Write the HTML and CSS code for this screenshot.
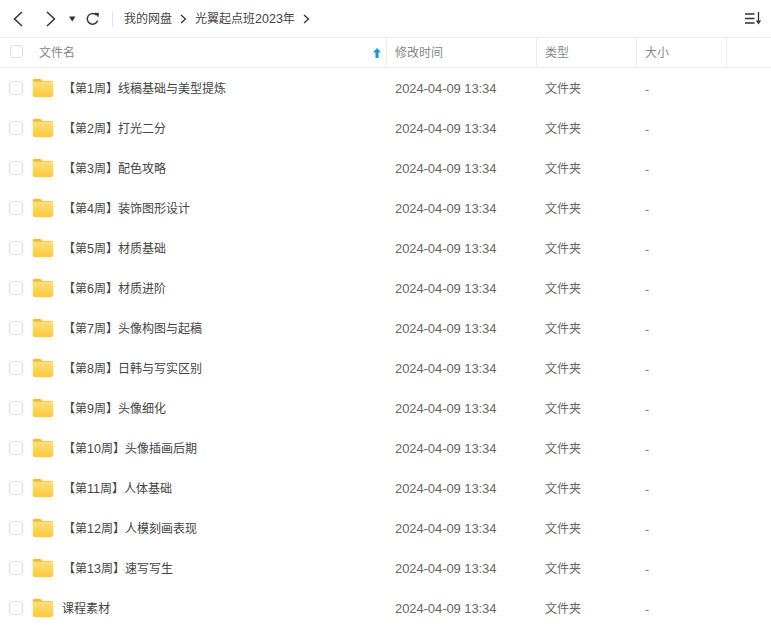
FILE: index.html
```html
<!DOCTYPE html>
<html lang="zh">
<head>
<meta charset="utf-8">
<title>光翼起点班2023年</title>
<link rel="stylesheet" href="styles.css">
</head>
<body>
<svg class="defs" width="0" height="0" aria-hidden="true">
  <defs>
    <linearGradient id="fg" x1="0" y1="0" x2="0" y2="1">
      <stop offset="0" stop-color="#ffe07a"/>
      <stop offset="1" stop-color="#fec93c"/>
    </linearGradient>
    <symbol id="folder" viewBox="0 0 20 18">
      <path d="M1.500 0h5.300c.8 0 1.300.4 1.700 1l.9 1.200h9.100a1.500 1.500 0 0 1 1.500 1.500V5H0V1.500A1.500 1.500 0 0 1 1.500 0z" fill="#f6b93b"/>
      <rect x="0" y="2.800" width="20" height="15.200" rx="1.800" fill="url(#fg)"/>
    </symbol>
  </defs>
</svg>
<header class="toolbar">
  <svg class="ic back" width="14" height="18" viewBox="0 0 14 18"><path d="M11 2 3.500 9 11 16" fill="none" stroke="#333" stroke-width="1.500"/></svg>
  <svg class="ic fwd" width="14" height="18" viewBox="0 0 14 18"><path d="M3 2l7.500 7L3 16" fill="none" stroke="#333" stroke-width="1.500"/></svg>
  <svg class="ic drop" width="7" height="6" viewBox="0 0 7 6"><path d="M0 .5h6.500L3.250 5.500z" fill="#333"/></svg>
  <svg class="ic refresh" width="14" height="14" viewBox="0 0 14 14"><path d="M11.600 8.500A5.300 5.300 0 1 1 10.200 3" fill="none" stroke="#333" stroke-width="1.400"/><path d="M8.300 .8l4.700.3-.7 4.500z" fill="#333"/></svg>
  <span class="sep"></span>
  <nav class="crumbs">
    <span>我的网盘</span>
    <svg width="7" height="10" viewBox="0 0 7 10"><path d="M1 1l4.500 4L1 9" fill="none" stroke="#333" stroke-width="1.300"/></svg>
    <span>光翼起点班<span class="num">2023</span>年</span>
    <svg width="7" height="10" viewBox="0 0 7 10"><path d="M1 1l4.500 4L1 9" fill="none" stroke="#333" stroke-width="1.300"/></svg>
  </nav>
  <svg class="ic sort" width="17" height="13" viewBox="0 0 17 13"><path d="M0 2h9.500M0 6.500h9.500M0 11h9.500" stroke="#333" stroke-width="1.300" fill="none"/><path d="M13.500 0v11" stroke="#333" stroke-width="1.300"/><path d="M10.800 8.500h5.400l-2.700 4z" fill="#333"/></svg>
</header>
<div class="thead">
  <div class="c-name head-name"><span class="check"></span><span class="name-label">文件名</span>
    <svg class="arrow" width="8" height="10" viewBox="0 0 8 10"><path d="M4 0 8 4.500H5.500V10h-3V4.500H0z" fill="#1a94dc"/></svg></div>
  <div class="c-time">修改时间</div>
  <div class="c-type">类型</div>
  <div class="c-size">大小</div>
  <div class="c-rest"></div>
</div>
<main class="tbody">
  <div class="row"><div class="c-name"><span class="check"></span><svg class="folder"><use href="#folder"/></svg><span class="fname">【第<span class="num">1</span>周】线稿基础与美型提炼</span></div><div class="c-time">2024-04-09 13:34</div><div class="c-type">文件夹</div><div class="c-size">-</div></div>
  <div class="row"><div class="c-name"><span class="check"></span><svg class="folder"><use href="#folder"/></svg><span class="fname">【第<span class="num">2</span>周】打光二分</span></div><div class="c-time">2024-04-09 13:34</div><div class="c-type">文件夹</div><div class="c-size">-</div></div>
  <div class="row"><div class="c-name"><span class="check"></span><svg class="folder"><use href="#folder"/></svg><span class="fname">【第<span class="num">3</span>周】配色攻略</span></div><div class="c-time">2024-04-09 13:34</div><div class="c-type">文件夹</div><div class="c-size">-</div></div>
  <div class="row"><div class="c-name"><span class="check"></span><svg class="folder"><use href="#folder"/></svg><span class="fname">【第<span class="num">4</span>周】装饰图形设计</span></div><div class="c-time">2024-04-09 13:34</div><div class="c-type">文件夹</div><div class="c-size">-</div></div>
  <div class="row"><div class="c-name"><span class="check"></span><svg class="folder"><use href="#folder"/></svg><span class="fname">【第<span class="num">5</span>周】材质基础</span></div><div class="c-time">2024-04-09 13:34</div><div class="c-type">文件夹</div><div class="c-size">-</div></div>
  <div class="row"><div class="c-name"><span class="check"></span><svg class="folder"><use href="#folder"/></svg><span class="fname">【第<span class="num">6</span>周】材质进阶</span></div><div class="c-time">2024-04-09 13:34</div><div class="c-type">文件夹</div><div class="c-size">-</div></div>
  <div class="row"><div class="c-name"><span class="check"></span><svg class="folder"><use href="#folder"/></svg><span class="fname">【第<span class="num">7</span>周】头像构图与起稿</span></div><div class="c-time">2024-04-09 13:34</div><div class="c-type">文件夹</div><div class="c-size">-</div></div>
  <div class="row"><div class="c-name"><span class="check"></span><svg class="folder"><use href="#folder"/></svg><span class="fname">【第<span class="num">8</span>周】日韩与写实区别</span></div><div class="c-time">2024-04-09 13:34</div><div class="c-type">文件夹</div><div class="c-size">-</div></div>
  <div class="row"><div class="c-name"><span class="check"></span><svg class="folder"><use href="#folder"/></svg><span class="fname">【第<span class="num">9</span>周】头像细化</span></div><div class="c-time">2024-04-09 13:34</div><div class="c-type">文件夹</div><div class="c-size">-</div></div>
  <div class="row"><div class="c-name"><span class="check"></span><svg class="folder"><use href="#folder"/></svg><span class="fname">【第<span class="num">10</span>周】头像插画后期</span></div><div class="c-time">2024-04-09 13:34</div><div class="c-type">文件夹</div><div class="c-size">-</div></div>
  <div class="row"><div class="c-name"><span class="check"></span><svg class="folder"><use href="#folder"/></svg><span class="fname">【第<span class="num">11</span>周】人体基础</span></div><div class="c-time">2024-04-09 13:34</div><div class="c-type">文件夹</div><div class="c-size">-</div></div>
  <div class="row"><div class="c-name"><span class="check"></span><svg class="folder"><use href="#folder"/></svg><span class="fname">【第<span class="num">12</span>周】人模刻画表现</span></div><div class="c-time">2024-04-09 13:34</div><div class="c-type">文件夹</div><div class="c-size">-</div></div>
  <div class="row"><div class="c-name"><span class="check"></span><svg class="folder"><use href="#folder"/></svg><span class="fname">【第<span class="num">13</span>周】速写写生</span></div><div class="c-time">2024-04-09 13:34</div><div class="c-type">文件夹</div><div class="c-size">-</div></div>
  <div class="row"><div class="c-name"><span class="check"></span><svg class="folder"><use href="#folder"/></svg><span class="fname plain">课程素材</span></div><div class="c-time">2024-04-09 13:34</div><div class="c-type">文件夹</div><div class="c-size">-</div></div>
</main>
</body>
</html>
```
FILE: styles.css
```css
html, body {
  margin: 0;
  height: 100%;
  overflow: hidden;
  background: #fff;
}
body {
  font-family: "Noto Sans CJK SC", "Liberation Sans", sans-serif;
  font-size: 12px;
  color: #444;
}
.defs { display: block; height: 0; }
.num { font-family: "Liberation Sans", sans-serif; font-size: 12.5px; }
.toolbar {
  display: flex;
  align-items: center;
  height: 37px;
  border-bottom: 1px solid #eee;
  padding-left: 11px;
}
.ic { flex: none; }
.fwd { margin-left: 19px; }
.drop { margin-left: 11px; }
.refresh { margin-left: 10px; }
.sep { width: 1px; height: 16px; background: #e4e4e4; margin: 0 11px 0 12px; }
.crumbs {
  display: flex;
  align-items: center;
  gap: 8px;
  color: #444;
  flex: 1;
  padding-bottom: 2px;
}
.crumbs svg { margin-top: 2px; }
.sort { margin-right: 9px; }
.thead {
  display: flex;
  height: 29px;
  border-bottom: 1px solid #eee;
  color: #888;
}
.thead > div {
  display: flex;
  align-items: center;
  box-sizing: border-box;
  border-right: 1px solid #eee;
  padding-bottom: 2px;
}
.c-name { width: 387px; display: flex; align-items: center; flex: none; padding-left: 10px; box-sizing: border-box; }
.c-time { width: 150px; flex: none; padding-left: 8px; box-sizing: border-box; }
.c-type { width: 100px; flex: none; padding-left: 8px; box-sizing: border-box; }
.c-size { width: 90px; flex: none; padding-left: 8px; box-sizing: border-box; }
.thead .c-rest { flex: 1; border-right: 0; }
.head-name { position: relative; }
.name-label { margin-left: 16px; }
.arrow { position: absolute; right: 5px; top: 10px; }
.check {
  width: 11px;
  height: 11px;
  border: 1px solid #ddd;
  border-radius: 3px;
  flex: none;
}
.row {
  display: flex;
  align-items: center;
  height: 40px;
  color: #666;
}
.row .c-name { color: #444; padding-left: 9px; }
.row .check { width: 12px; height: 12px; border-radius: 4px; }
.folder {
  width: 20px;
  height: 18px;
  margin-left: 10px;
  flex: none;
  filter: drop-shadow(0 0 1px rgba(255, 220, 110, .7));
}
.fname { margin-left: 10px; padding-bottom: 2px; }
.fname.plain { margin-left: 9px; }
.row .c-type { padding-bottom: 2px; }
.row .c-time { font-family: "Liberation Sans", sans-serif; font-size: 13px; letter-spacing: -.08px; }
```
